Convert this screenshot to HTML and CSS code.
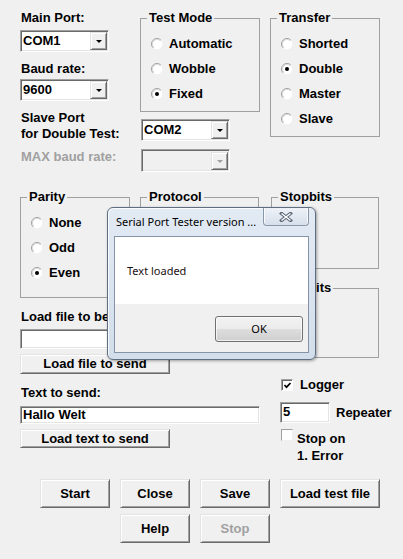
FILE: index.html
```html
<!DOCTYPE html>
<html>
<head>
<meta charset="utf-8">
<link rel="stylesheet" href="styles.css">
</head>
<body>
<div class="top">
  <div class="top-left">
    <div class="row-a">
      <div class="col1">
        <span class="lbl lbl-main">Main Port:</span>
        <div class="combo combo-main"><span class="combo-text">COM1</span><span class="combo-btn"><i class="arrow"></i></span></div>
        <span class="lbl lbl-baud">Baud rate:</span>
        <div class="combo combo-baud"><span class="combo-text">9600</span><span class="combo-btn"><i class="arrow"></i></span></div>
      </div>
      <fieldset class="grp testmode">
        <legend>Test Mode</legend>
        <div class="radio-row"><svg class="rb" viewBox="0 0 12 12"><circle cx="6" cy="6" r="5.3" fill="#fff"/><path d="M2.11 9.89 A5.5 5.5 0 0 1 9.89 2.11" stroke="#a0a0a0" fill="none"/><path d="M2.82 9.18 A4.5 4.5 0 0 1 9.18 2.82" stroke="#d8d8d8" fill="none"/></svg><span>Automatic</span></div>
        <div class="radio-row"><svg class="rb" viewBox="0 0 12 12"><circle cx="6" cy="6" r="5.3" fill="#fff"/><path d="M2.11 9.89 A5.5 5.5 0 0 1 9.89 2.11" stroke="#a0a0a0" fill="none"/><path d="M2.82 9.18 A4.5 4.5 0 0 1 9.18 2.82" stroke="#d8d8d8" fill="none"/></svg><span>Wobble</span></div>
        <div class="radio-row"><svg class="rb" viewBox="0 0 12 12"><circle cx="6" cy="6" r="5.3" fill="#fff"/><path d="M2.11 9.89 A5.5 5.5 0 0 1 9.89 2.11" stroke="#a0a0a0" fill="none"/><path d="M2.82 9.18 A4.5 4.5 0 0 1 9.18 2.82" stroke="#d8d8d8" fill="none"/><circle cx="6" cy="6" r="2" fill="#000"/></svg><span>Fixed</span></div>
      </fieldset>
    </div>
    <div class="slave-row">
      <span class="lbl lbl-slave">Slave Port<br>for Double Test:</span>
      <div class="combo combo-slave"><span class="combo-text">COM2</span><span class="combo-btn"><i class="arrow"></i></span></div>
    </div>
    <div class="max-row">
      <span class="lbl lbl-max">MAX baud rate:</span>
      <div class="combo combo-dis"><span class="combo-text"></span><span class="combo-btn"><i class="arrow arrow-dis"></i></span></div>
    </div>
  </div>
  <fieldset class="grp transfer">
    <legend>Transfer</legend>
    <div class="radio-row"><svg class="rb" viewBox="0 0 12 12"><circle cx="6" cy="6" r="5.3" fill="#fff"/><path d="M2.11 9.89 A5.5 5.5 0 0 1 9.89 2.11" stroke="#a0a0a0" fill="none"/><path d="M2.82 9.18 A4.5 4.5 0 0 1 9.18 2.82" stroke="#d8d8d8" fill="none"/></svg><span>Shorted</span></div>
    <div class="radio-row"><svg class="rb" viewBox="0 0 12 12"><circle cx="6" cy="6" r="5.3" fill="#fff"/><path d="M2.11 9.89 A5.5 5.5 0 0 1 9.89 2.11" stroke="#a0a0a0" fill="none"/><path d="M2.82 9.18 A4.5 4.5 0 0 1 9.18 2.82" stroke="#d8d8d8" fill="none"/><circle cx="6" cy="6" r="2" fill="#000"/></svg><span>Double</span></div>
    <div class="radio-row"><svg class="rb" viewBox="0 0 12 12"><circle cx="6" cy="6" r="5.3" fill="#fff"/><path d="M2.11 9.89 A5.5 5.5 0 0 1 9.89 2.11" stroke="#a0a0a0" fill="none"/><path d="M2.82 9.18 A4.5 4.5 0 0 1 9.18 2.82" stroke="#d8d8d8" fill="none"/></svg><span>Master</span></div>
    <div class="radio-row"><svg class="rb" viewBox="0 0 12 12"><circle cx="6" cy="6" r="5.3" fill="#fff"/><path d="M2.11 9.89 A5.5 5.5 0 0 1 9.89 2.11" stroke="#a0a0a0" fill="none"/><path d="M2.82 9.18 A4.5 4.5 0 0 1 9.18 2.82" stroke="#d8d8d8" fill="none"/></svg><span>Slave</span></div>
  </fieldset>
</div>

<div class="mid">
  <div class="mid-left">
    <div class="groups">
      <fieldset class="grp parity">
        <legend>Parity</legend>
        <div class="radio-row"><svg class="rb" viewBox="0 0 12 12"><circle cx="6" cy="6" r="5.3" fill="#fff"/><path d="M2.11 9.89 A5.5 5.5 0 0 1 9.89 2.11" stroke="#a0a0a0" fill="none"/><path d="M2.82 9.18 A4.5 4.5 0 0 1 9.18 2.82" stroke="#d8d8d8" fill="none"/></svg><span>None</span></div>
        <div class="radio-row"><svg class="rb" viewBox="0 0 12 12"><circle cx="6" cy="6" r="5.3" fill="#fff"/><path d="M2.11 9.89 A5.5 5.5 0 0 1 9.89 2.11" stroke="#a0a0a0" fill="none"/><path d="M2.82 9.18 A4.5 4.5 0 0 1 9.18 2.82" stroke="#d8d8d8" fill="none"/></svg><span>Odd</span></div>
        <div class="radio-row"><svg class="rb" viewBox="0 0 12 12"><circle cx="6" cy="6" r="5.3" fill="#fff"/><path d="M2.11 9.89 A5.5 5.5 0 0 1 9.89 2.11" stroke="#a0a0a0" fill="none"/><path d="M2.82 9.18 A4.5 4.5 0 0 1 9.18 2.82" stroke="#d8d8d8" fill="none"/><circle cx="6" cy="6" r="2" fill="#000"/></svg><span>Even</span></div>
      </fieldset>
      <fieldset class="grp protocol">
        <legend>Protocol</legend>
      </fieldset>
    </div>
    <span class="lbl lbl-load">Load file to be sent:</span>
    <div class="input input-file"></div>
    <button class="btn btn-send">Load file to send</button>
    <span class="lbl lbl-text">Text to send:</span>
    <div class="input input-text">Hallo Welt</div>
    <button class="btn btn-send btn-loadtext">Load text to send</button>
  </div>
  <div class="mid-right">
    <fieldset class="grp stopbits">
      <legend>Stopbits</legend>
    </fieldset>
    <fieldset class="grp databits">
      <legend>Databits</legend>
    </fieldset>
    <div class="chk-row logger">
      <span class="cb"><svg viewBox="0 0 9 9" class="tick"><polyline points="1.5,4 3.5,6.2 7.5,2" fill="none" stroke="#000" stroke-width="1.7"/></svg></span>
      <span>Logger</span>
    </div>
    <div class="rep-row">
      <div class="input input-rep">5</div>
      <span class="rep-txt">Repeater</span>
    </div>
    <div class="stop-row">
      <span class="cb cb-flat"></span>
      <span class="stop-txt">Stop on<br>1. Error</span>
    </div>
  </div>
</div>

<div class="buttons">
  <button class="btn">Start</button>
  <button class="btn">Close</button>
  <button class="btn">Save</button>
  <button class="btn">Load test file</button>
  <button class="btn btn-help">Help</button>
  <button class="btn btn-stop">Stop</button>
</div>

<div class="dialog">
  <div class="dlg-title">
    <span class="dlg-caption">Serial Port Tester version ...</span>
    <span class="dlg-close"><svg viewBox="0 0 14 10" class="xicon"><path d="M2.5 1.5 L11.5 8.5 M11.5 1.5 L2.5 8.5" stroke="#5d6676" stroke-width="3.4" stroke-linecap="square"/><path d="M2.5 1.5 L11.5 8.5 M11.5 1.5 L2.5 8.5" stroke="#fff" stroke-width="1.4"/></svg></span>
  </div>
  <div class="dlg-client">
    <div class="dlg-msg">Text loaded</div>
    <div class="dlg-foot"><span class="dlg-ok">OK</span></div>
  </div>
</div>
</body>
</html>
```
FILE: styles.css
```css
* { box-sizing: border-box; }
body {
  margin: 0;
  width: 403px;
  height: 559px;
  overflow: hidden;
  position: relative;
  background: #f0f0f0;
  color: #000;
  font: bold 13px/16px "Liberation Sans", Arial, sans-serif;
}

.lbl { display: block; padding-left: 1px; white-space: nowrap; }

/* ---------- top ---------- */
.top { display: flex; padding-left: 20px; }
.top-left { width: 250px; }
.row-a { display: flex; height: 112px; }
.col1 { width: 120px; }
.lbl-main { margin-top: 10px; }
.combo-main { margin-top: 4px; }
.lbl-baud { margin-top: 9px; }
.combo-baud { margin-top: 2px; }

.combo {
  display: flex;
  align-items: center;
  width: 89px;
  height: 22px;
  padding: 1px;
  background: #fff;
  border: 1px solid;
  border-color: #a0a0a0 #fff #fff #a0a0a0;
  box-shadow: inset 1px 1px #696969, inset -1px -1px #e3e3e3;
  flex: none;
}
.combo-text { flex: 1; padding-left: 1px; line-height: 16px; }
.combo-btn {
  width: 17px;
  height: 18px;
  display: flex;
  align-items: center;
  justify-content: center;
  background: #f0f0f0;
  border: 1px solid;
  border-color: #e3e3e3 #696969 #696969 #e3e3e3;
  box-shadow: inset 1px 1px #fff, inset -1px -1px #a0a0a0;
}
.arrow {
  width: 0;
  height: 0;
  border-left: 3px solid transparent;
  border-right: 3px solid transparent;
  border-top: 3px solid #000;
  margin-top: 1px;
}
.arrow-dis { border-top-color: #a0a0a0; }

.grp {
  margin: 0;
  padding: 5px 0 0 10px;
  border: 1px solid #a0a0a0;
  min-width: 0;
  flex: none;
}
.grp legend {
  padding: 0 2px;
  margin-left: -4px;
  line-height: 16px;
}
.radio-row {
  display: flex;
  align-items: center;
  gap: 6px;
  height: 25px;
  white-space: nowrap;
}
.rb { width: 12px; height: 12px; flex: none; }

.testmode { margin-top: 10px; width: 120px; height: 102px; }
.transfer { margin-top: 10px; width: 110px; height: 127px; }

.slave-row { display: flex; margin-top: -2px; }
.lbl-slave { width: 121px; }
.combo-slave { margin-top: 9px; }
.max-row { display: flex; margin-top: 7px; }
.lbl-max { width: 121px; color: #a0a0a0; }
.combo-dis { height: 23px; background: #f0f0f0; }

/* ---------- middle ---------- */
.mid { display: flex; padding-left: 20px; margin-top: 17px; }
.mid-left { width: 251px; flex: none; }
.groups { display: flex; gap: 10px; }
.parity { width: 110px; height: 109px; }
.protocol { width: 119px; height: 109px; }

.lbl-load { margin-top: 11px; }
.input {
  width: 240px;
  height: 20px;
  padding: 1px 2px;
  background: #fff;
  border: 1px solid;
  border-color: #a0a0a0 #fff #fff #a0a0a0;
  box-shadow: inset 1px 1px #696969, inset -1px -1px #e3e3e3;
  line-height: 16px;
  white-space: nowrap;
  flex: none;
}
.input-file { margin-top: 4px; }
.btn {
  padding: 0;
  margin: 0;
  font: inherit;
  color: #000;
  background: #f0f0f0;
  border: 1px solid;
  border-color: #e3e3e3 #696969 #696969 #e3e3e3;
  box-shadow: inset 1px 1px #fff, inset -1px -1px #a0a0a0;
  text-align: center;
  white-space: nowrap;
}
.btn-send { display: block; width: 150px; height: 20px; margin-top: 5px; }
.lbl-text { margin-top: 11px; }
.input-text { margin-top: 5px; height: 18px; padding-top: 0; }
.btn-loadtext { height: 19px; margin-top: 5px; }

.mid-right { width: 112px; flex: none; }
.stopbits { width: 108px; height: 80px; }
.databits { width: 108px; height: 78px; margin-top: 11px; }

.chk-row {
  display: flex;
  align-items: center;
  gap: 7px;
  height: 16px;
  margin-top: 19px;
  padding-left: 10px;
}
.cb {
  width: 12px;
  height: 12px;
  flex: none;
  display: flex;
  align-items: center;
  justify-content: center;
  background: #fff;
  border: 1px solid;
  border-color: #a0a0a0 #fff #fff #a0a0a0;
  box-shadow: inset 1px 1px #696969;
}
.tick { width: 9px; height: 9px; }
.cb-flat { box-shadow: none; border-color: #a0a0a0 #f0f0f0 #f0f0f0 #a0a0a0; }

.rep-row {
  display: flex;
  align-items: center;
  gap: 6px;
  margin-top: 9px;
  padding-left: 9px;
}
.input-rep { width: 50px; height: 21px; }
.rep-txt { white-space: nowrap; }

.stop-row {
  display: flex;
  align-items: flex-start;
  gap: 4px;
  margin-top: 6px;
  padding-left: 10px;
}
.stop-txt { margin-top: 1px; line-height: 17px; white-space: nowrap; }

/* ---------- bottom buttons ---------- */
.buttons {
  display: grid;
  grid-template-columns: 70px 70px 70px 100px;
  grid-auto-rows: 29px;
  column-gap: 10px;
  row-gap: 6px;
  padding-left: 40px;
  margin-top: 15px;
}
.btn-help { grid-column: 2; }
.btn-stop { grid-column: 3; color: #a0a0a0; }

/* ---------- message dialog ---------- */
.dialog {
  position: absolute;
  left: 107px;
  top: 207px;
  width: 209px;
  height: 153px;
  padding: 0 6px 6px 6px;
  border: 1px solid #5e6d80;
  border-radius: 6px;
  background: linear-gradient(#e2eaf4, #d3deeb);
  box-shadow: inset 1px 1px rgba(255,255,255,0.8), 1px 1px 3px rgba(0,0,0,0.35);
  font: normal 11px/16px "Noto Sans", "Liberation Sans", sans-serif;
  color: #000;
}
.dlg-title {
  display: flex;
  justify-content: space-between;
  height: 28px;
}
.dlg-caption { padding-left: 2px; line-height: 28px; white-space: nowrap; }
.dlg-close {
  width: 46px;
  height: 18px;
  display: flex;
  align-items: center;
  justify-content: center;
  border: 1px solid #8995a8;
  border-top: none;
  border-radius: 0 0 4px 4px;
  background: linear-gradient(#eef2f8, #d6dfea);
  box-shadow: inset 1px 0 #f8fafd, inset -1px 0 #f8fafd;
}
.xicon { width: 14px; height: 10px; }
.dlg-client {
  height: 117px;
  border: 1px solid #8593a7;
  background: #f0f0f0;
}
.dlg-msg {
  height: 67px;
  background: #fff;
  padding: 26px 0 0 12px;
  color: #1a1010;
}
.dlg-foot {
  display: flex;
  justify-content: flex-end;
  padding: 12px 5px 0 0;
}
.dlg-ok {
  width: 88px;
  height: 26px;
  display: flex;
  align-items: center;
  justify-content: center;
  border: 1px solid #707070;
  border-radius: 3px;
  background: linear-gradient(#f2f2f2 0%, #ebebeb 50%, #dddddd 51%, #cfcfcf 100%);
  box-shadow: inset 0 0 0 1px rgba(255,255,255,0.7);
}
```
